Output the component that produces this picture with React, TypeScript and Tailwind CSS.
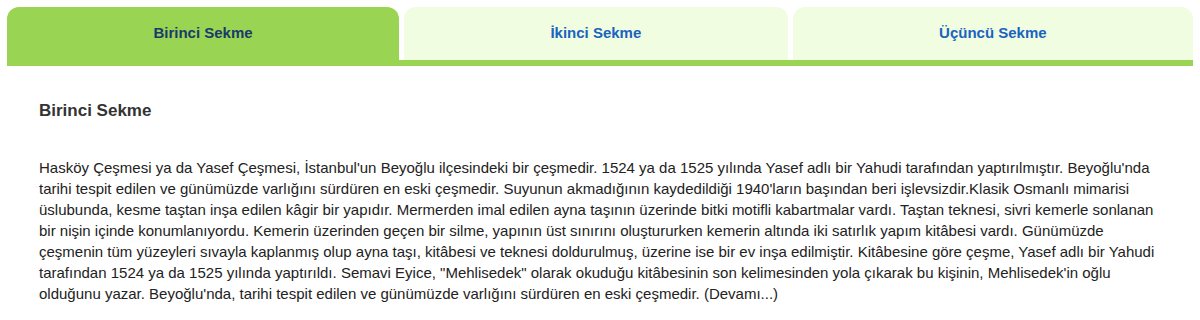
const tabs = ["Birinci Sekme", "İkinci Sekme", "Üçüncü Sekme"];

const text =
  "Hasköy Çeşmesi ya da Yasef Çeşmesi, İstanbul'un Beyoğlu ilçesindeki bir çeşmedir. 1524 ya da 1525 yılında Yasef adlı bir Yahudi tarafından yaptırılmıştır. Beyoğlu'nda tarihi tespit edilen ve günümüzde varlığını sürdüren en eski çeşmedir. Suyunun akmadığının kaydedildiği 1940'ların başından beri işlevsizdir.Klasik Osmanlı mimarisi üslubunda, kesme taştan inşa edilen kâgir bir yapıdır. Mermerden imal edilen ayna taşının üzerinde bitki motifli kabartmalar vardı. Taştan teknesi, sivri kemerle sonlanan bir nişin içinde konumlanıyordu. Kemerin üzerinden geçen bir silme, yapının üst sınırını oluştururken kemerin altında iki satırlık yapım kitâbesi vardı. Günümüzde çeşmenin tüm yüzeyleri sıvayla kaplanmış olup ayna taşı, kitâbesi ve teknesi doldurulmuş, üzerine ise bir ev inşa edilmiştir. Kitâbesine göre çeşme, Yasef adlı bir Yahudi tarafından 1524 ya da 1525 yılında yaptırıldı. Semavi Eyice, \"Mehlisedek\" olarak okuduğu kitâbesinin son kelimesinden yola çıkarak bu kişinin, Mehlisedek'in oğlu olduğunu yazar. Beyoğlu'nda, tarihi tespit edilen ve günümüzde varlığını sürdüren en eski çeşmedir. (Devamı...)";

export default function App() {
  const active = 0;
  return (
    <div className="p-[7px] font-['Liberation_Sans',Arial,sans-serif] bg-white">
      <div className="flex gap-[5px] border-b-[6px] border-[#99d452]">
        {tabs.map((t, i) => (
          <div
            key={t}
            className={
              i === active
                ? "grow h-[53px] flex items-center justify-center rounded-t-[12px] bg-[#99d452] text-[#1b3a6c] text-[15px] font-bold px-4"
                : "grow h-[53px] flex items-center justify-center rounded-t-[12px] bg-[#f0fde0] text-[#1a63c0] text-[15px] font-bold px-4"
            }
          >
            {t}
          </div>
        ))}
      </div>
      <div className="px-8 pt-[35px]">
        <h3 className="text-[17px] leading-[19px] font-bold text-[#333]">
          Birinci Sekme
        </h3>
        <p className="mt-[37px] text-[15px] leading-[21px] text-[#222]">
          {text}
        </p>
      </div>
    </div>
  );
}
